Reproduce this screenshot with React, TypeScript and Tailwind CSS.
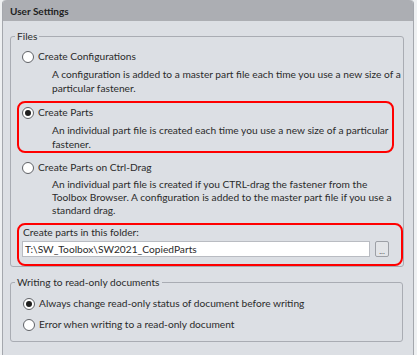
import type { ReactNode } from 'react';

// Toolbox "User Settings" panel — Files + read-only document groups, two highlighted regions.

const FONT = { fontFamily: 'Lato, "Noto Sans", sans-serif' };

function Radio({ checked }: { checked?: boolean }) {
  return (
    <span className="flex h-[12px] w-[12px] shrink-0 items-center justify-center rounded-full border border-[#5f6166] bg-white">
      {checked && <span className="h-[6px] w-[6px] rounded-full bg-[#1f1f1f]" />}
    </span>
  );
}

function Option({
  label,
  checked,
  tight,
  children,
}: {
  label: string;
  checked?: boolean;
  tight?: boolean;
  children?: ReactNode;
}) {
  return (
    <div>
      <div className="flex h-[16px] items-center gap-[4px] pl-[11px]">
        <Radio checked={checked} />
        <span>{label}</span>
      </div>
      {children && (
        <p className={tight ? 'mt-[2px] pl-[41px] leading-[13px]' : 'mt-[2px] pl-[41px] leading-[14px]'}>
          {children}
        </p>
      )}
    </div>
  );
}

export default function App() {
  return (
    <div className="h-[355px] w-[417px] bg-[#eef0f2] text-[10.2px] text-[#2b2b2b]" style={FONT}>
      <div className="ml-[2px] h-[355px] w-[412px] rounded-t-[4px] border-x border-[#a4a7ad] bg-[#dcdfe4]">
        <div className="h-[21px] rounded-t-[4px] bg-[#acaeb3] pl-[7px] text-[10px] font-bold leading-[22px] text-[#1e1e1e]">
          User Settings
        </div>

        <div className="pl-[7px] pt-[7px]">
          <fieldset className="w-[393px] rounded-[3px] border border-[#a9acb3]">
            <legend className="ml-[4px] px-[2px] leading-[16px]">Files</legend>

            <div className="mt-[5px]">
              <Option label="Create Configurations">
                A configuration is added to a master part file each time you use a new size of a particular
                fastener.
              </Option>
            </div>

            <div className="ml-[6px] mt-[6px] w-[377px] rounded-[8px] border-2 border-[#ff0000] pt-[2px]">
              <div className="-ml-[8px]">
                <Option label="Create Parts" checked>
                  An individual part file is created each time you use a new size of a particular fastener.
                </Option>
              </div>
            </div>

            <div className="mt-[7px]">
              <Option label="Create Parts on Ctrl-Drag" tight>
                An individual part file is created if you CTRL-drag the fastener from the Toolbox Browser. A
                configuration is added to the master part file if you use a standard drag.
              </Option>
            </div>

            <div className="ml-[6px] mt-[6px] w-[386px] rounded-[8px] border-2 border-[#ff0000] px-[3px] pb-[7px]">
              <div className="pl-[1px] leading-[14px]">Create parts in this folder:</div>
              <div className="mt-[2px] flex items-center gap-[5px]">
                <div className="h-[16px] w-[348px] border border-[#b9bcc2] bg-white pl-[2px] leading-[14px]">
                  T:\SW_Toolbox\SW2021_CopiedParts
                </div>
                <button className="flex h-[16px] w-[14px] items-end justify-center rounded-[2px] border border-[#9da0a6] bg-[#e3e5e8] text-[8px] leading-[10px] text-[#555]">
                  ...
                </button>
              </div>
            </div>
          </fieldset>

          <fieldset className="mt-[7px] w-[393px] rounded-[3px] border border-[#a9acb3] pb-[8px]">
            <legend className="ml-[4px] px-[2px] leading-[16px]">Writing to read-only documents</legend>
            <div className="mt-[6px] space-y-[5px] pl-[1px]">
              <Option label="Always change read-only status of document before writing" checked />
              <Option label="Error when writing to a read-only document" />
            </div>
          </fieldset>
        </div>
      </div>
    </div>
  );
}
